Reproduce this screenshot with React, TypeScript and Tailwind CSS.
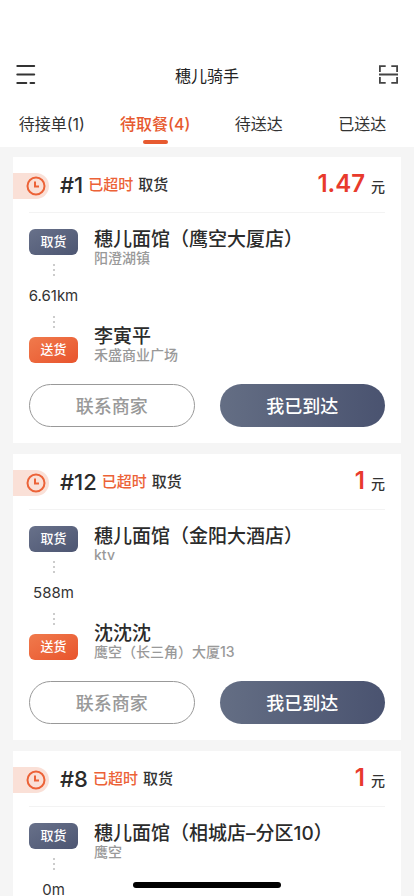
import { useState } from 'react'

type Stop = { name: string; place: string }

type Order = {
  no: number
  price: string
  distance: string
  pickup: Stop
  dropoff?: Stop
}

const TABS = ['待接单(1)', '待取餐(4)', '待送达', '已送达']

const ORDERS: Order[] = [
  {
    no: 1,
    price: '1.47',
    distance: '6.61km',
    pickup: { name: '穗儿面馆（鹰空大厦店）', place: '阳澄湖镇' },
    dropoff: { name: '李寅平', place: '禾盛商业广场' },
  },
  {
    no: 12,
    price: '1',
    distance: '588m',
    pickup: { name: '穗儿面馆（金阳大酒店）', place: 'ktv' },
    dropoff: { name: '沈沈沈', place: '鹰空（长三角）大厦13' },
  },
  {
    no: 8,
    price: '1',
    distance: '0m',
    pickup: { name: '穗儿面馆（相城店–分区10）', place: '鹰空' },
  },
]

export default function App() {
  const [tab, setTab] = useState(1)

  return (
    <div className="flex h-screen flex-col overflow-hidden bg-[#f5f5f5] font-['Inter','Noto_Sans_CJK_SC',sans-serif] text-[#333]">
      <div className="shrink-0 bg-white pt-[50px]">
        <header className="flex h-[50px] items-center justify-between px-4">
          <button type="button" aria-label="菜单">
            <MenuIcon />
          </button>
          <h1 className="pt-[2px] text-base text-[#222]">穗儿骑手</h1>
          <button type="button" aria-label="扫一扫">
            <ScanIcon />
          </button>
        </header>
        <nav className="grid h-[47px] grid-cols-4">
          {TABS.map((label, i) => (
            <button
              key={label}
              type="button"
              onClick={() => setTab(i)}
              className={
                i === tab
                  ? 'flex flex-col items-center justify-between pt-3 pb-[3px] text-base font-medium text-[#e75a30]'
                  : 'flex flex-col items-center justify-between pt-3 pb-[3px] text-base text-[#333]'
              }
            >
              {label}
              {i === tab && <span className="h-1 w-[25px] rounded-full bg-[#e75a30]" />}
            </button>
          ))}
        </nav>
      </div>

      <main className="flex-1 space-y-[11px] overflow-y-auto px-[13px] pt-[10px] [scrollbar-width:none]">
        {ORDERS.map((order) => (
          <OrderCard key={order.no} order={order} />
        ))}
      </main>

      {/* home indicator */}
      <div className="fixed inset-x-0 bottom-2 mx-auto h-[6px] w-[148px] rounded-full bg-black" />
    </div>
  )
}

function OrderCard({ order }: { order: Order }) {
  return (
    <article className="bg-white pb-4">
      <div className="flex h-[55px] items-center pt-[2px]">
        <span className="flex h-[26px] w-9 items-center justify-end rounded-r-full bg-[#fae0d7] pr-[3px]">
          <ClockIcon />
        </span>
        <h2 className="ml-[11px] flex items-center gap-[5px] text-[15px] font-medium">
          <span className="text-[22px] text-[#2b2b2b]">#{order.no}</span>
          <span className="text-[#ec6237]">已超时</span>
          <span>取货</span>
        </h2>
        <p className="mr-4 ml-auto flex items-baseline gap-[6px] pb-[3px] text-sm font-medium">
          <span className="text-2xl font-semibold text-[#e83a2c]">{order.price}</span>
          元
        </p>
      </div>

      <div className="mx-4 border-t border-[#f3f3f3] pt-4">
        <div className="grid grid-cols-[49px_1fr] gap-x-4">
          <Badge className="bg-linear-to-br from-[#68718a] to-[#4d5672]">取货</Badge>
          <div className="h-[26px]">
            <StopInfo stop={order.pickup} />
          </div>
          <div className="flex h-[82px] flex-col items-center gap-[14px] pt-[9px]">
            <Dots />
            <span className="text-[15px] leading-3 whitespace-nowrap">{order.distance}</span>
            {order.dropoff && <Dots />}
          </div>
          <span />
          {order.dropoff && (
            <>
              <Badge className="bg-linear-to-br from-[#f07a4c] to-[#e8532c]">送货</Badge>
              <div className="-mt-[11px] h-[37px]">
                <StopInfo stop={order.dropoff} />
              </div>
            </>
          )}
        </div>

        {order.dropoff && (
          <div className="mt-[21px] grid grid-cols-2 gap-[25px]">
            <button
              type="button"
              className="h-[43px] rounded-full border border-[#999] pt-[2px] text-lg font-medium text-[#999]"
            >
              联系商家
            </button>
            <button
              type="button"
              className="h-[43px] rounded-full bg-linear-to-r from-[#646e84] to-[#4a5370] pt-[2px] text-lg font-medium text-white"
            >
              我已到达
            </button>
          </div>
        )}
      </div>
    </article>
  )
}

function Badge({ className, children }: { className: string; children: React.ReactNode }) {
  return (
    <span
      className={`${className} grid h-[26px] place-items-center rounded-md text-[13px] font-medium text-white`}
    >
      {children}
    </span>
  )
}

function StopInfo({ stop }: { stop: Stop }) {
  return (
    <div className="whitespace-nowrap">
      <h3 className="text-[19px] leading-[22px] font-medium text-[#2b2b2b]">{stop.name}</h3>
      <p className="text-sm leading-[14px] font-medium text-[#999]">{stop.place}</p>
    </div>
  )
}

function Dots() {
  return (
    <span className="flex flex-col gap-[3px]">
      <i className="size-[2px] bg-[#ccc]" />
      <i className="size-[2px] bg-[#ccc]" />
      <i className="size-[2px] bg-[#ccc]" />
    </span>
  )
}

function MenuIcon() {
  return (
    <svg width="20" height="20" viewBox="0 0 20 20" stroke="#333" strokeWidth="2" strokeLinecap="round">
      <path d="M1.3 1H18.2M1.3 9.5H18.2M1.3 18H10.3M14.5 18H18.2" />
    </svg>
  )
}

function ScanIcon() {
  return (
    <svg width="20" height="20" viewBox="0 0 20 20" fill="none" stroke="#444" strokeWidth="1.8">
      <path d="M1.9 7V1.2H7.7M13.3 1.2H19.1V7M1.9 12V17.8H7.7M13.3 17.8H19.1V12M1 9.5H20" />
    </svg>
  )
}

function ClockIcon() {
  return (
    <svg width="20" height="20" viewBox="0 0 20 20" fill="none" stroke="#ec6237" strokeWidth="2">
      <circle cx="10" cy="10" r="8.5" />
      <path d="M9 5.5V10.5H13" />
    </svg>
  )
}
